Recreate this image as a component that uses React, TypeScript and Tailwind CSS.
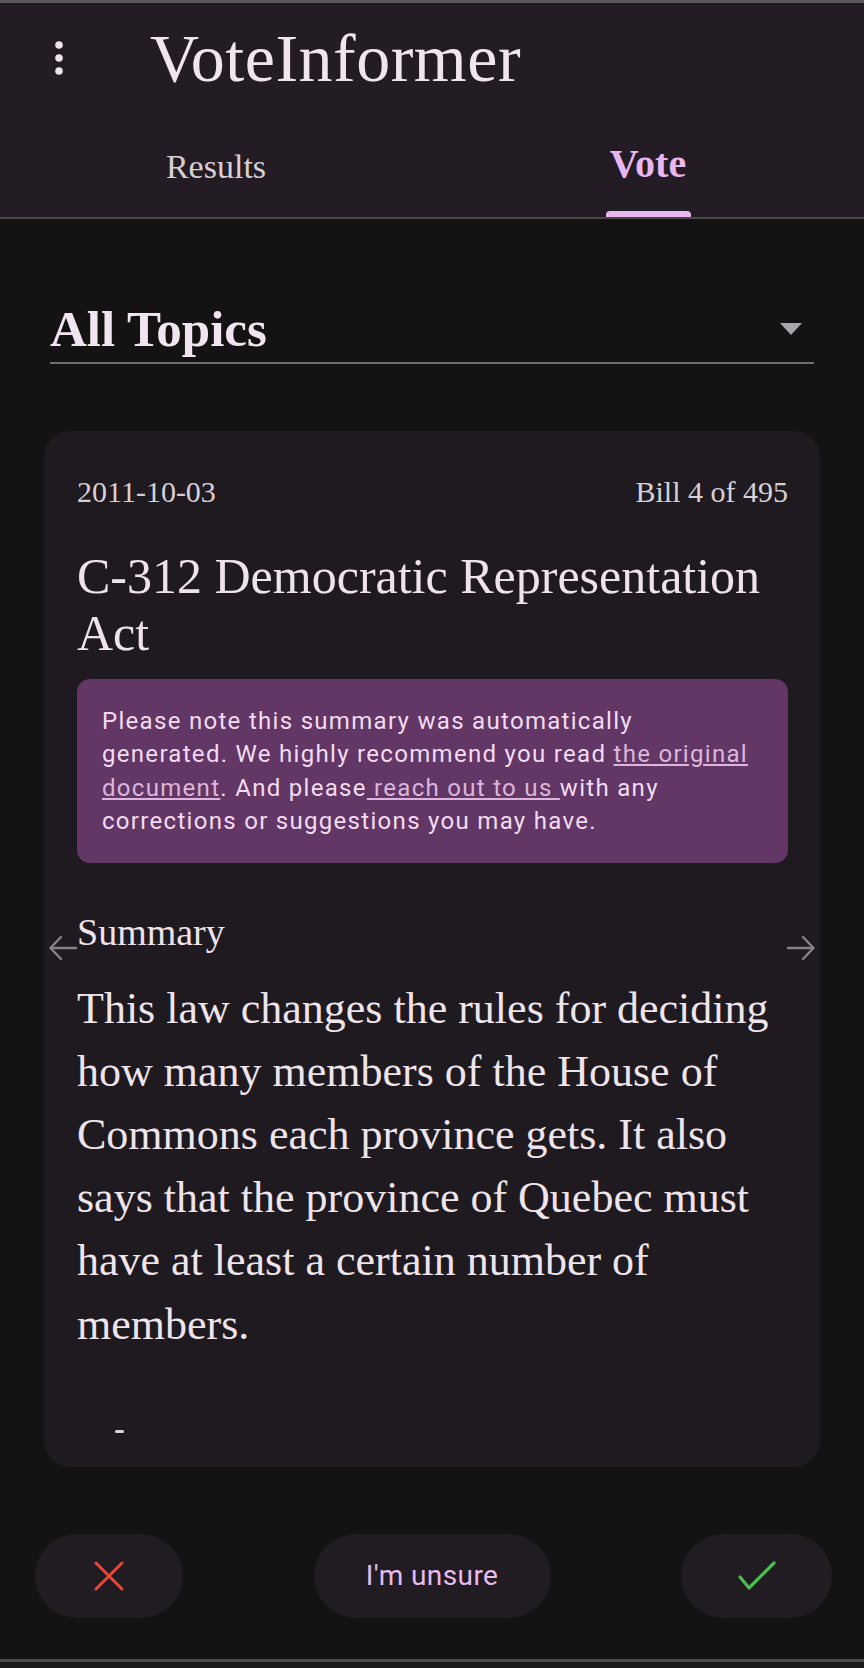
import React from 'react';

const serif = { fontFamily: '"Liberation Serif", "Times New Roman", serif' };
const sans = { fontFamily: 'Roboto, "Liberation Sans", sans-serif' };

const summaryText =
  'This law changes the rules for deciding how many members of the House of Commons each province gets. It also says that the province of Quebec must have at least a certain number of members.';

const MoreIcon = () => (
  <svg width="10" height="36" viewBox="0 0 10 36" fill="#efe3ec">
    <circle cx="5" cy="5" r="3.8" />
    <circle cx="5" cy="18" r="3.8" />
    <circle cx="5" cy="31" r="3.8" />
  </svg>
);

const Arrow = ({ dir }: { dir: 'left' | 'right' }) => (
  <svg
    width="30"
    height="26"
    viewBox="0 0 30 26"
    fill="none"
    stroke="#86828a"
    strokeWidth="2.4"
    strokeLinecap="round"
    strokeLinejoin="round"
    className={dir === 'right' ? 'rotate-180' : ''}
  >
    <path d="M28 13H3" />
    <path d="M13 2L2.5 13L13 24" />
  </svg>
);

const App: React.FC = () => {
  return (
    <div className="w-[864px] h-[1668px] bg-[#151214] flex flex-col overflow-hidden" style={serif}>
      {/* Top app bar */}
      <div className="h-[3px] bg-[#5a575b]" />
      <header className="bg-[#241c24]">
        <div className="h-[107px] flex items-start">
          <div className="w-[54px] pl-[54px] pt-[37px]">
            <MoreIcon />
          </div>
          <h1 className="ml-[96px] pt-[21px] text-[68px] leading-none tracking-[0.5px] text-[#f1e5ef]">VoteInformer</h1>
        </div>

        {/* Tabs */}
        <div className="h-[107px] flex">
          <div className="flex-1 flex flex-col items-center">
            <span className="pt-[40px] text-[34px] leading-none text-[#d9cfd6]">Results</span>
          </div>
          <div className="flex-1 flex flex-col items-center">
            <span className="pt-[34px] text-[40px] leading-none font-bold text-[#e9b6ef]">Vote</span>
            <div className="mt-auto w-[85px] h-[6px] rounded-t-[4px] bg-[#e9b6ef]" />
          </div>
        </div>
      </header>
      <div className="h-[2px] bg-[#49464a]" />

      {/* Topic selector */}
      <div className="mx-[50px] mt-[85px]">
        <div className="flex items-start justify-between">
          <span className="text-[51px] leading-none font-bold text-[#f1e5ef]">All Topics</span>
          <svg width="22" height="12" viewBox="0 0 22 12" className="mt-[19px] mr-[12px]">
            <path d="M0 0H22L11 12Z" fill="#a9a5ab" />
          </svg>
        </div>
        <div className="mt-[7px] h-[2px] bg-[#6f6b71]" />
      </div>

      {/* Bill card */}
      <div className="relative mx-[44px] mt-[67px] h-[1036px] rounded-[26px] bg-[#1e1a1f] overflow-hidden pl-[33px] pr-[32px]">
        <div className="pt-[46px] flex justify-between text-[30px] leading-none text-[#d9d0d6]">
          <span>2011-10-03</span>
          <span>Bill 4 of 495</span>
        </div>

        <h2 className="mt-[41px] text-[50px] leading-[57px] text-[#eee3ec]">C-312 Democratic Representation Act</h2>

        <div
          className="mt-[17px] rounded-[13px] bg-[#623665] px-[25px] pt-[26px] pb-[24px] text-[24px] leading-[33.4px] tracking-[1.3px] text-[#f3dcf2]"
          style={sans}
        >
          <div className="whitespace-nowrap">Please note this summary was automatically</div>
          <div className="whitespace-nowrap">
            generated. We highly recommend you read <a className="underline text-[#dcb6dc]">the original</a>
          </div>
          <div className="whitespace-nowrap">
            <a className="underline text-[#dcb6dc]">document</a>. And please<a className="underline text-[#dcb6dc]"> reach out to us </a>with any
          </div>
          <div className="whitespace-nowrap">corrections or suggestions you may have.</div>
        </div>

        <div className="mt-[50px] text-[38px] leading-none text-[#eee3ec]">Summary</div>
        <p className="mt-[26px] text-[44px] leading-[63.2px] text-[#eee4ec]">{summaryText}</p>
        <div className="mt-[74px] ml-[38px] w-[9px] h-[3px] rounded-full bg-[#d8d4d8]" />

        <div className="absolute left-[4px] top-[504px]">
          <Arrow dir="left" />
        </div>
        <div className="absolute right-[4px] top-[504px]">
          <Arrow dir="right" />
        </div>
      </div>

      {/* Vote actions */}
      <div className="mt-[67px] pl-[35px] pr-[32px] flex justify-between">
        <button className="w-[148px] h-[84px] rounded-full bg-[#211c22] flex items-center justify-center">
          <svg width="30" height="30" viewBox="0 0 30 30" stroke="#ea4537" strokeWidth="3" strokeLinecap="round">
            <path d="M2 2L28 28M28 2L2 28" />
          </svg>
        </button>
        <button
          className="w-[237px] h-[84px] rounded-full bg-[#211c22] text-[28px] tracking-[0.4px] text-[#e6bbee]"
          style={sans}
        >
          I'm unsure
        </button>
        <button className="w-[151px] h-[84px] rounded-full bg-[#211c22] flex items-center justify-center">
          <svg width="38" height="30" viewBox="0 0 38 30" fill="none" stroke="#4cbc52" strokeWidth="3.2" strokeLinecap="round" strokeLinejoin="round">
            <path d="M2 16L11 27L36 2" />
          </svg>
        </button>
      </div>

      <div className="mt-[41px] h-[3px] bg-[#4d4a4e]" />
      <div className="flex-1 bg-[#1b1a1c]" />
    </div>
  );
};

export default App;
